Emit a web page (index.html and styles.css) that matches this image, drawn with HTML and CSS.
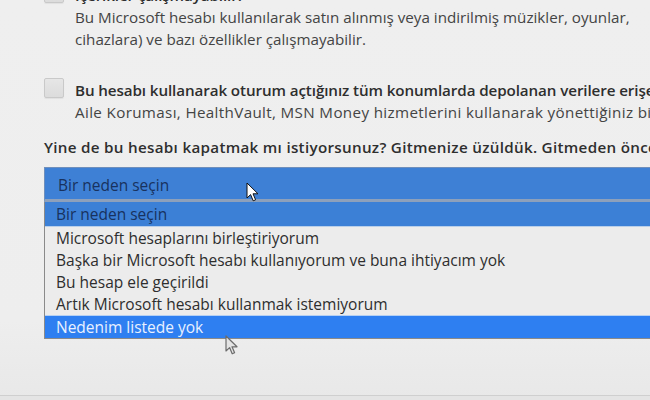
FILE: index.html
```html
<!DOCTYPE html>
<html lang="tr">
<head>
<meta charset="utf-8">
<title>Hesabı kapat</title>
<link rel="stylesheet" href="styles.css">
</head>
<body>
<div class="page">
  <div class="check-row first">
    <span class="checkbox"></span>
    <div class="check-text">
      <div class="title">İçerikler çalışmayabilir!</div>
      <div class="desc">Bu Microsoft hesabı kullanılarak satın alınmış veya indirilmiş müzikler, oyunlar,</div>
      <div class="desc">cihazlara) ve bazı özellikler çalışmayabilir.</div>
    </div>
  </div>
  <div class="check-row second">
    <span class="checkbox"></span>
    <div class="check-text">
      <div class="title">Bu hesabı kullanarak oturum açtığınız tüm konumlarda depolanan verilere erişemeyeceksiniz.</div>
      <div class="desc wide">Aile Koruması, HealthVault, MSN Money hizmetlerini kullanarak yönettiğiniz bilgiler kaybolabilir.</div>
    </div>
  </div>
  <div class="question">Yine de bu hesabı kapatmak mı istiyorsunuz? Gitmenize üzüldük. Gitmeden önce lütfen bize nedenini söyleyin.</div>
  <div class="select">
    <div class="select-head">Bir neden seçin</div>
    <ul class="options">
      <li class="opt selected">Bir neden seçin</li>
      <li class="opt">Microsoft hesaplarını birleştiriyorum</li>
      <li class="opt">Başka bir Microsoft hesabı kullanıyorum ve buna ihtiyacım yok</li>
      <li class="opt">Bu hesap ele geçirildi</li>
      <li class="opt">Artık Microsoft hesabı kullanmak istemiyorum</li>
      <li class="opt hover">Nedenim listede yok</li>
    </ul>
    <svg class="cursor cursor-a" width="14" height="21" viewBox="0 0 14 21"><path d="M1 1 L1 16 L4.6 12.6 L7.2 18.8 L9.6 17.8 L7 11.8 L12 11.8 Z" fill="#fff" stroke="#111" stroke-width="1" stroke-linejoin="round"/></svg>
    <svg class="cursor cursor-b" width="14" height="21" viewBox="0 0 14 21"><path d="M1 1 L1 16 L4.6 12.6 L7.2 18.8 L9.6 17.8 L7 11.8 L12 11.8 Z" fill="#e4e4e4" stroke="#6c6c6c" stroke-width="1.2" stroke-linejoin="round"/></svg>
  </div>
</div>
<div class="footer"></div>
</body>
</html>
```
FILE: styles.css
```css
html, body {
  margin: 0;
  padding: 0;
}
body {
  width: 650px;
  height: 400px;
  overflow: hidden;
  background: linear-gradient(#efefef 0%, #eeeeee 80%, #e8e8e8 100%);
  font-family: "Open Sans", "Noto Sans", sans-serif;
  font-size: 15.2px;
  color: #3a3a3a;
  position: relative;
}
.page {
  display: flow-root;
  padding-left: 44px;
  white-space: nowrap;
  height: 395px;
}
.check-row {
  display: flex;
  gap: 11px;
  align-items: flex-start;
}
.check-row.first {
  margin-top: -16px;
}
.check-row.second {
  margin-top: 29px;
}
.checkbox {
  flex: none;
  width: 18px;
  height: 18px;
  margin-top: -1px;
  border: 1px solid #c9c9c9;
  border-radius: 2px;
  background: linear-gradient(#e6e6e6, #dcdcdc);
  box-shadow: 0 1px 1px rgba(0,0,0,0.06);
}
.check-text {
  line-height: 22px;
}
.title {
  font-weight: 600;
  color: #2e2e2e;
  letter-spacing: -0.1px;
}
.desc {
  color: #444;
}
.desc.wide {
  letter-spacing: 0.35px;
}
.question {
  margin-top: 13px;
  line-height: 22px;
  font-weight: 600;
  color: #2e2e2e;
  letter-spacing: 0.3px;
}
.select {
  position: relative;
  margin-top: 9px;
  width: 700px;
}
.select-head {
  height: 29px;
  padding-top: 2px;
  line-height: 31px;
  padding-left: 13px;
  background: #3e80d5;
  border: 1px solid #6f8fbb;
  border-bottom: 3px solid #8da0bb;
  color: #18325e;
  font-size: 15.5px;
}
.options {
  list-style: none;
  margin: 0;
  padding: 0;
  border-left: 1px solid #8a8a8a;
  border-bottom: 1px solid #8a8a8a;
  background: #ececec;
}
.opt {
  height: 22px;
  line-height: 22px;
  padding-left: 11px;
  color: #2e2e2e;
  font-size: 15.5px;
}
.opt.selected {
  height: 24px;
  line-height: 24px;
  background: #3c80d6;
  color: #18325e;
  border-bottom: 1px solid #b9cfe9;
}
.opt.hover {
  background: #2e7ff1;
  color: #e9f1ff;
  border-top: 1px solid #b5d0f3;
}
.cursor {
  position: absolute;
}
.cursor-a {
  left: 202px;
  top: 15px;
}
.cursor-b {
  left: 181px;
  top: 168px;
}
.footer {
  height: 5px;
  border-top: 1px solid #cfcfcf;
  background: #e4e4e4;
}
```
